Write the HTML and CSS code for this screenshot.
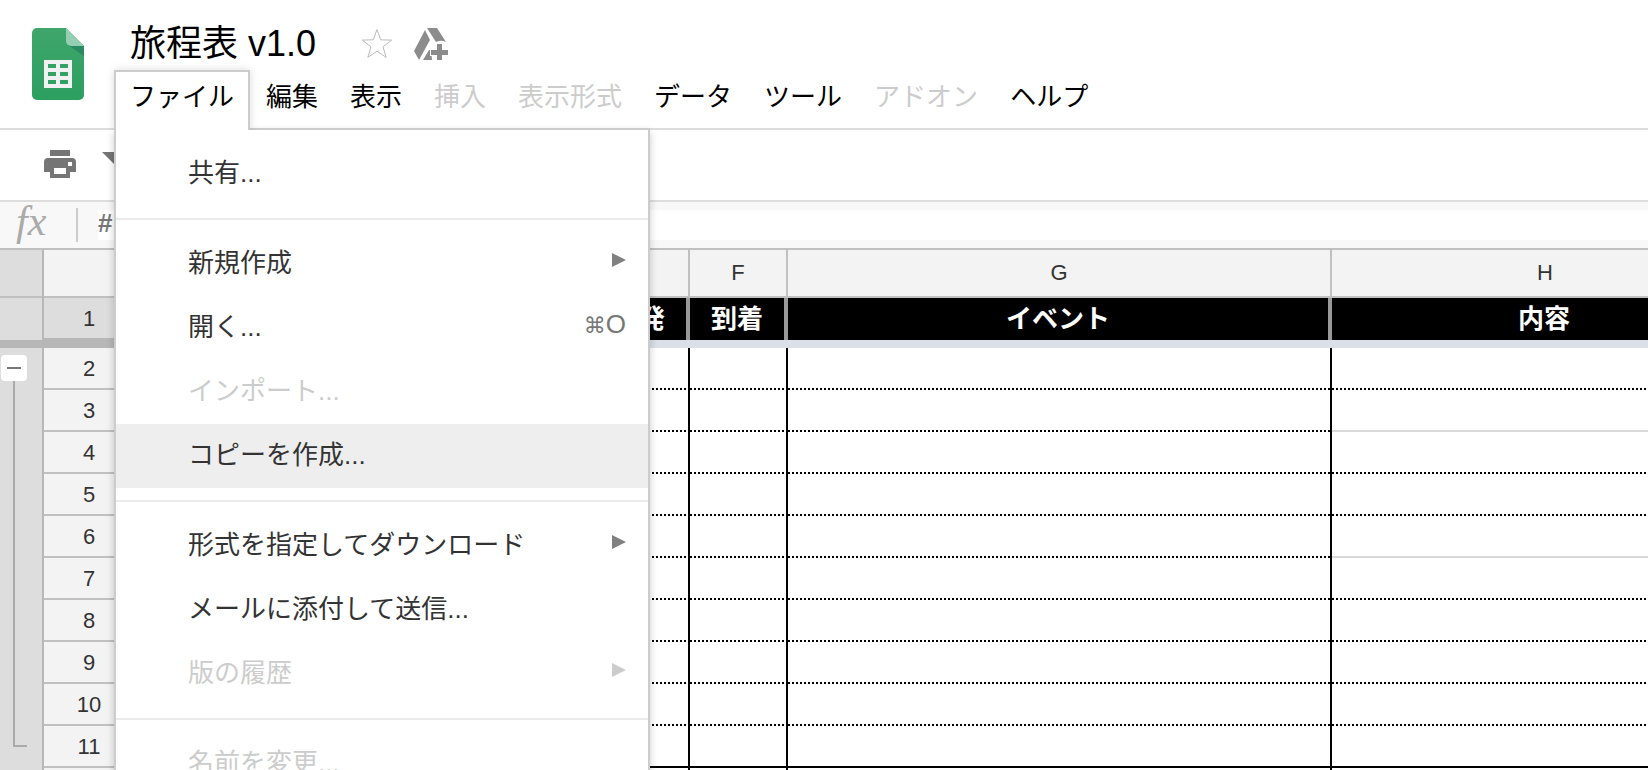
FILE: index.html
```html
<!DOCTYPE html>
<html lang="ja">
<head>
    <meta charset="UTF-8">
    <meta name="viewport" content="width=device-width, initial-scale=1.0">
    <title>旅程表 v1.0</title>
    <link rel="stylesheet" href="styles.css">
</head>
<body>
    <div class="app">
        <header class="header">
            <a class="logo" href="#" aria-label="スプレッドシート ホーム">
                <svg width="52" height="72" viewBox="0 0 52 72">
                    <defs>
                        <linearGradient id="sheet" x1="0" y1="0" x2="0" y2="1">
                            <stop offset="0" stop-color="#3fa66b"/>
                            <stop offset="1" stop-color="#2c9f60"/>
                        </linearGradient>
                    </defs>
                    <path fill="url(#sheet)" d="M5 0h29l18 18v49a5 5 0 0 1-5 5H5a5 5 0 0 1-5-5V5a5 5 0 0 1 5-5z"/>
                    <path fill="#2a8a62" d="M36 17l16 11V18z"/>
                    <path fill="#93cfb0" d="M34 0l18 18H39a5 5 0 0 1-5-5z"/>
                    <path fill="#f1f1f1" fill-rule="evenodd" d="M12 32h28v28H12zM16 36v4h8v-4zM28 36v4h8v-4zM16 44v4h8v-4zM28 44v4h8v-4zM16 52v4h8v-4zM28 52v4h8v-4z"/>
                </svg>
            </a>
            <div class="header-main">
                <div class="title-row">
                    <h1 class="title">旅程表 v1.0</h1>
                    <button class="icon-btn star" aria-label="スター">
                        <svg width="32" height="32" viewBox="0 0 32 32">
                            <path fill="none" stroke="#bbb" d="M16 1.500l3.700 10.300 11 .3-8.700 6.700 3.200 10.600-9.200-6.200-9.200 6.200L10 18.800 1.300 12.100l11-.3z"/>
                        </svg>
                    </button>
                    <button class="icon-btn" aria-label="マイドライブに追加">
                        <svg width="34" height="32" viewBox="0 0 34 32">
                            <path fill="#8c8c8c" d="M13 0h10l9 14a12 12 0 0 0-10 0zM11 2l5 10L5 32 0 23zM15 22l2 0 1 10H9z"/>
                            <path fill="#8c8c8c" stroke="#fff" stroke-width="2" paint-order="stroke" d="M23 16h5v6h6v5h-6v5h-5v-5h-6v-5h6z"/>
                        </svg>
                    </button>
                </div>
                <nav class="menubar">
                    <div class="menu-wrap">
                        <button class="menu-btn open">ファイル</button>
                        <div class="menu">
                            <button class="item">共有...</button>
                            <hr>
                            <button class="item">新規作成<span class="arrow"></span></button>
                            <button class="item">開く...<span class="key"><span class="cmd">⌘</span>O</span></button>
                            <button class="item" disabled>インポート...</button>
                            <button class="item active">コピーを作成...</button>
                            <hr>
                            <button class="item">形式を指定してダウンロード<span class="arrow"></span></button>
                            <button class="item">メールに添付して送信...</button>
                            <button class="item" disabled>版の履歴<span class="arrow"></span></button>
                            <hr>
                            <button class="item" disabled>名前を変更...</button>
                        </div>
                    </div>
                    <button class="menu-btn">編集</button>
                    <button class="menu-btn">表示</button>
                    <button class="menu-btn" disabled>挿入</button>
                    <button class="menu-btn" disabled>表示形式</button>
                    <button class="menu-btn">データ</button>
                    <button class="menu-btn">ツール</button>
                    <button class="menu-btn" disabled>アドオン</button>
                    <button class="menu-btn">ヘルプ</button>
                </nav>
            </div>
        </header>

        <div class="toolbar">
            <button class="icon-btn" aria-label="印刷">
                <svg width="32" height="28" viewBox="0 0 32 28">
                    <path fill="#757575" fill-rule="evenodd" d="M6 0h20v6H6zM4 8h24a4 4 0 0 1 4 4v10h-6v6H6v-6H0V12a4 4 0 0 1 4-4zM24 12v4h4v-4zM10 18v6h12v-6z"/>
                </svg>
            </button>
            <button class="icon-btn filter" aria-label="フィルタ">
                <svg width="26" height="28" viewBox="0 0 26 28">
                    <path fill="#757575" d="M0 2h26L13 15z"/>
                </svg>
            </button>
        </div>

        <div class="formula-bar">
            <label class="fx" for="formula">fx</label>
            <input class="formula" id="formula" type="text" value="#">
        </div>

        <main class="sheet">
            <div class="outline">
                <div class="outline-head"></div>
                <div class="outline-frozen"></div>
                <div class="outline-group">
                    <button class="collapse" aria-label="グループを閉じる"></button>
                    <div class="bracket"></div>
                </div>
            </div>
            <table class="grid">
                <colgroup>
                    <col class="c-num">
                    <col class="c-a"><col class="c-a"><col class="c-a"><col class="c-a">
                    <col class="c-e"><col class="c-e">
                    <col class="c-g">
                    <col class="c-h">
                </colgroup>
                <thead>
                    <tr class="letters"><th></th><th></th><th></th><th></th><th></th><th></th><th>F</th><th>G</th><th>H</th></tr>
                    <tr class="frozen"><th>1</th><td></td><td></td><td></td><td></td><td>出発</td><td>到着</td><td>イベント</td><td>内容</td></tr>
                    <tr class="divider"><th></th><td colspan="8"></td></tr>
                </thead>
                <tbody>
                    <tr><th>2</th><td></td><td></td><td></td><td></td><td></td><td></td><td></td><td></td></tr>
                    <tr><th>3</th><td></td><td></td><td></td><td></td><td></td><td></td><td></td><td class="plain"></td></tr>
                    <tr><th>4</th><td></td><td></td><td></td><td></td><td></td><td></td><td></td><td></td></tr>
                    <tr><th>5</th><td></td><td></td><td></td><td></td><td></td><td></td><td></td><td></td></tr>
                    <tr><th>6</th><td></td><td></td><td></td><td></td><td></td><td></td><td></td><td class="plain"></td></tr>
                    <tr><th>7</th><td></td><td></td><td></td><td></td><td></td><td></td><td></td><td></td></tr>
                    <tr><th>8</th><td></td><td></td><td></td><td></td><td></td><td></td><td></td><td></td></tr>
                    <tr><th>9</th><td></td><td></td><td></td><td></td><td></td><td></td><td></td><td></td></tr>
                    <tr><th>10</th><td></td><td></td><td></td><td></td><td></td><td></td><td></td><td></td></tr>
                    <tr class="last"><th>11</th><td></td><td></td><td></td><td></td><td></td><td></td><td></td><td></td></tr>
                    <tr><th></th><td></td><td></td><td></td><td></td><td></td><td></td><td></td><td></td></tr>
                </tbody>
            </table>
        </main>
    </div>
</body>
</html>
```

FILE: styles.css
```css
* {
    margin: 0;
    padding: 0;
    box-sizing: border-box;
}

body {
    font-family: "Liberation Sans", "Noto Sans CJK JP", sans-serif;
    font-size: 26px;
    color: #000;
    background-color: #fff;
}

button {
    font: inherit;
    color: inherit;
    background: none;
    border: none;
    cursor: pointer;
}

.app {
    display: flex;
    flex-direction: column;
    height: 100vh;
    overflow: hidden;
}

/* header */
.header {
    display: flex;
    flex-shrink: 0;
    height: 130px;
    border-bottom: 2px solid #ddd;
}

.logo {
    padding: 28px 30px 0 32px;
}

.title-row {
    display: flex;
    align-items: center;
    height: 70px;
    padding: 18px 0 0 16px;
}

.title {
    font-size: 36px;
    font-weight: normal;
    line-height: 54px;
    margin-right: 45px;
}

.icon-btn {
    display: flex;
}

.star {
    margin-right: 21px;
}

.menubar {
    display: flex;
    white-space: nowrap;
}

.menu-wrap {
    position: relative;
    z-index: 10;
}

.menu-btn {
    height: 60px;
    padding: 0 14px 8px;
    border: 2px solid transparent;
    border-bottom: none;
    line-height: 50px;
}

.menu-btn:disabled,
.item:disabled {
    color: #ccc;
    cursor: default;
}

.menu-btn.open {
    position: relative;
    z-index: 2;
    background-color: #fff;
    border-color: #ccc;
    box-shadow: 0 0 8px rgba(0, 0, 0, 0.15);
    clip-path: inset(-8px -8px 0 -8px);
}

.menu {
    position: absolute;
    top: 58px;
    left: 0;
    width: 536px;
    padding: 12px 0;
    background-color: #fff;
    border: 2px solid #ccc;
    box-shadow: 0 4px 8px rgba(0, 0, 0, 0.2);
}

.menu hr {
    margin: 12px 0;
    border: none;
    border-top: 2px solid #ebebeb;
}

.item {
    display: flex;
    align-items: center;
    width: 100%;
    height: 64px;
    padding: 0 22px 8px 72px;
    color: #333;
    text-align: left;
}

.item.active {
    background-color: #eee;
}

.key {
    margin-left: auto;
    color: #777;
}

.cmd {
    font-family: "DejaVu Sans", sans-serif;
    font-size: 22px;
}

.arrow {
    margin-left: auto;
    border-left: 14px solid #808080;
    border-top: 7px solid transparent;
    border-bottom: 7px solid transparent;
}

.item:disabled .arrow {
    border-left-color: #ccc;
}

/* toolbar and formula bar */
.toolbar {
    display: flex;
    flex-shrink: 0;
    align-items: center;
    gap: 26px;
    height: 72px;
    padding: 0 44px 2px;
    border-bottom: 2px solid #ddd;
}

.formula-bar {
    display: flex;
    flex-shrink: 0;
    align-items: center;
    height: 48px;
    background-color: #f8f8f8;
    border-bottom: 2px solid #c0c0c0;
}

.fx {
    width: 78px;
    height: 34px;
    padding-left: 16px;
    border-right: 2px solid #ccc;
    color: #aaa;
    font-family: "Liberation Serif", serif;
    font-size: 42px;
    font-style: italic;
    line-height: 26px;
}

.formula {
    flex: 1;
    height: 30px;
    padding-bottom: 4px;
    margin-left: 20px;
    border: none;
    outline: none;
    background-color: #fff;
    color: #777;
    font: bold 26px "Liberation Sans", "Noto Sans CJK JP", sans-serif;
}

/* sheet */
.sheet {
    display: flex;
    flex: 1;
    overflow: hidden;
}

.outline {
    flex-shrink: 0;
    width: 44px;
    background-color: #ddd;
    border-right: 2px solid #b7b7b7;
}

.outline-head {
    height: 48px;
    border-bottom: 2px solid #c0c0c0;
}

.outline-frozen {
    height: 50px;
    margin-right: -2px;
    border-bottom: 8px solid #b7b7b7;
}

.outline-group {
    display: flex;
    flex-direction: column;
    height: 420px;
    padding: 7px 15px 21px 1px;
}

.collapse {
    display: flex;
    align-items: center;
    justify-content: center;
    width: 26px;
    height: 26px;
    background-color: #fff;
    border-radius: 4px;
}

.collapse::before {
    content: "";
    width: 14px;
    height: 2px;
    background-color: #777;
}

.bracket {
    flex: 1;
    margin-left: 12px;
    border: solid #aaa;
    border-width: 0 0 2px 2px;
}

.grid {
    flex-shrink: 0;
    width: 1716px;
    table-layout: fixed;
    border-spacing: 0;
    align-self: flex-start;
}

.c-num { width: 92px; }
.c-a { width: 114px; }
.c-e { width: 98px; }
.c-g { width: 544px; }
.c-h { width: 428px; }

.grid th {
    height: 42px;
    padding-top: 2px;
    background-color: #f3f3f3;
    border: solid #c0c0c0;
    border-width: 0 2px 2px 0;
    color: #333;
    font-size: 22px;
    font-weight: normal;
    line-height: 38px;
}

.grid .letters th {
    height: 48px;
    padding: 0;
}

.grid .frozen th {
    background-color: #ddd;
    border-bottom-color: #b7b7b7;
}

.frozen td {
    background-color: #000;
    border-right: 4px solid #999;
    color: #fff;
    font-weight: bold;
    line-height: 40px;
    text-align: center;
}

.grid .divider th {
    height: 8px;
    padding: 0;
    background-color: #b7b7b7;
    border: none;
}

.divider td {
    background-color: #dadfe8;
}

/* 2px square dots along the bottom of every cell */
tbody td {
    border-right: 2px solid #000;
    background: repeating-linear-gradient(90deg, #000 0 2px, #fff 2px 4px) bottom / 100% 2px no-repeat;
}

tbody .plain {
    background: linear-gradient(#d9d9d9, #d9d9d9) bottom / 100% 2px no-repeat;
}

.last td {
    background: linear-gradient(#000, #000) bottom / 100% 2px no-repeat;
}
```
